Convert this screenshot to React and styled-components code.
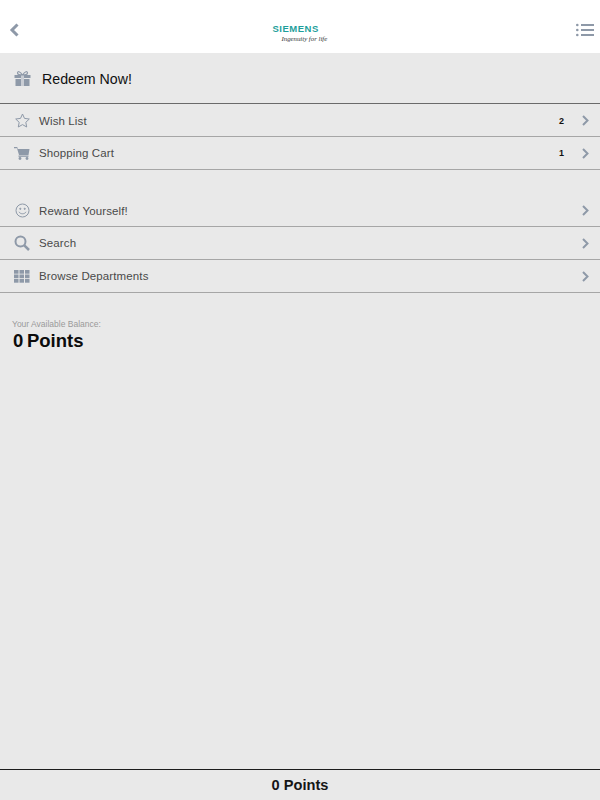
import React from 'react';
import styled, { createGlobalStyle } from 'styled-components';

const GlobalStyle = createGlobalStyle`
  html, body { margin: 0; padding: 0; }
  body { font-family: "Liberation Sans", Arial, sans-serif; background: #e9e9e9; }
`;

const Page = styled.div`
  width: 600px;
  height: 800px;
  display: flex;
  flex-direction: column;
  background: #e9e9e9;
  overflow: hidden;
`;

const Header = styled.header`
  height: 53px;
  flex: none;
  background: #fff;
  display: flex;
  align-items: center;
  justify-content: space-between;
  padding: 7px 5px 0 4px;
  box-sizing: border-box;
`;

const HeaderIcon = styled.div`
  width: 20px;
  display: flex;
  justify-content: center;
`;

const Logo = styled.div`
  display: flex;
  flex-direction: column;
  align-items: flex-start;
  width: 54px;
  margin-top: 5px;
`;

const LogoName = styled.div`
  font-size: 9.5px;
  line-height: 10px;
  font-weight: 700;
  letter-spacing: 0.5px;
  color: #1f9f9b;
`;

const LogoTag = styled.div`
  font-family: "Liberation Serif", serif;
  font-style: italic;
  font-size: 6.8px;
  line-height: 7px;
  color: #333;
  margin-left: 9px;
  margin-top: 1px;
  white-space: nowrap;
`;

const Redeem = styled.div`
  display: flex;
  align-items: center;
  gap: 11px;
  padding: 1px 14px 0;
  box-sizing: content-box;
  height: 49px;
  font-size: 14.2px;
  color: #111;
  border-bottom: 1px solid #6a6a6a;
`;

const List = styled.div`
  display: flex;
  flex-direction: column;
  margin-bottom: ${p => p.$gap || 0}px;
`;

const Row = styled.div`
  height: 33px;
  box-sizing: border-box;
  display: flex;
  align-items: center;
  padding: 0 11px 0 14px;
  border-bottom: 1px solid #a6a6a6;

  &:first-child {
    padding-top: 1px;
  }
`;

const RowIcon = styled.div`
  width: 16px;
  height: 16px;
  margin-right: 9px;
  display: flex;
  align-items: center;
  justify-content: center;
`;

const RowLabel = styled.div`
  flex: 1;
  font-size: 11.5px;
  letter-spacing: 0.12px;
  color: #4a4a4a;
`;

const Count = styled.div`
  font-size: 9px;
  font-weight: 700;
  color: #111;
  margin-right: 18px;
`;

const Balance = styled.div`
  padding: 26px 12px 0;
  flex: 1;
`;

const BalanceLabel = styled.div`
  font-size: 8.5px;
  line-height: 10px;
  color: #9a9a9a;
`;

const BalanceValue = styled.div`
  font-size: 18.5px;
  line-height: 24px;
  font-weight: 700;
  color: #0c0c0c;
  word-spacing: -1.5px;
  padding-left: 1px;
`;

const Footer = styled.footer`
  height: 30px;
  flex: none;
  border-top: 1px solid #1c1c1c;
  display: flex;
  align-items: center;
  justify-content: center;
  font-size: 14.6px;
  font-weight: 700;
  color: #161616;
`;

const ICON = '#8e99a8';

const Chevron = () => (
  <svg width="7" height="11" viewBox="0 0 7 11" fill="none" stroke={ICON} strokeWidth="2">
    <path d="M1 1l4.500 4.500L1 10" />
  </svg>
);

const Back = () => (
  <svg width="10" height="14" viewBox="0 0 10 14" fill="none" stroke={ICON} strokeWidth="3">
    <path d="M8.500 1.500L3 7l5.500 5.500" />
  </svg>
);

const Menu = () => (
  <svg width="18" height="14" viewBox="0 0 18 14" fill={ICON}>
    <circle cx="1.300" cy="2" r="1.300" />
    <circle cx="1.300" cy="7" r="1.300" />
    <circle cx="1.300" cy="12" r="1.300" />
    <rect x="5" y="1" width="13" height="2" />
    <rect x="5" y="6" width="13" height="2" />
    <rect x="5" y="11" width="13" height="2" />
  </svg>
);

const Gift = () => (
  <svg width="17" height="15" viewBox="0 0 17 15" fill={ICON}>
    <rect x="0.500" y="4" width="16" height="3" />
    <rect x="1.500" y="8" width="14" height="7" />
    <rect x="7" y="4" width="3" height="11" fill="#c9cdd4" />
    <path d="M8.500 4C6 0 3.500 0 3.500 2S6 4 8.500 4zM8.500 4C11 0 13.500 0 13.500 2S11 4 8.500 4z" fill="none" stroke={ICON} strokeWidth="1.200" />
  </svg>
);

const Star = () => (
  <svg width="15" height="15" viewBox="0 0 15 15" fill="none" stroke={ICON} strokeWidth="1">
    <path d="M7.500 1l2 4.400 4.800.6-3.500 3.300.9 4.700-4.200-2.400L3.300 14l.9-4.700L.7 6l4.800-.6z" />
  </svg>
);

const Cart = () => (
  <svg width="16" height="14" viewBox="0 0 16 14" fill={ICON}>
    <path d="M0 1h3.200l.6 2H15.500l-1 6H5L3 2.200H0z" />
    <path d="M4.500 9.500h10v1.300H4.500z" />
    <circle cx="6" cy="12.500" r="1.400" />
    <circle cx="13" cy="12.500" r="1.400" />
  </svg>
);

const Smile = () => (
  <svg width="15" height="15" viewBox="0 0 15 15" fill="none" stroke={ICON} strokeWidth="1">
    <circle cx="7.500" cy="7.500" r="6.500" />
    <circle cx="5.300" cy="5.800" r="0.600" fill={ICON} />
    <circle cx="9.700" cy="5.800" r="0.600" fill={ICON} />
    <path d="M4 8.800c1 2.600 6 2.600 7 0" />
  </svg>
);

const Search = () => (
  <svg width="16" height="16" viewBox="0 0 16 16" fill="none" stroke={ICON}>
    <circle cx="6.500" cy="6.500" r="5" strokeWidth="2" />
    <path d="M10.300 10.300L15 15" strokeWidth="2.500" />
  </svg>
);

const Grid = () => (
  <svg width="16" height="13" viewBox="0 0 16 13" fill={ICON}>
    {[0, 4.500, 9].map(y =>
      [0, 5.500, 11].map(x => <rect key={`${x}-${y}`} x={x} y={y} width="4.500" height="3.700" />)
    )}
  </svg>
);

const topRows = [
  { label: 'Wish List', icon: <Star />, count: 2 },
  { label: 'Shopping Cart', icon: <Cart />, count: 1 },
];

const bottomRows = [
  { label: 'Reward Yourself!', icon: <Smile /> },
  { label: 'Search', icon: <Search /> },
  { label: 'Browse Departments', icon: <Grid /> },
];

const MenuRow = ({ label, icon, count }) => (
  <Row>
    <RowIcon>{icon}</RowIcon>
    <RowLabel>{label}</RowLabel>
    {count && <Count>{count}</Count>}
    <Chevron />
  </Row>
);

export default function App() {
  return (
    <Page>
      <GlobalStyle />
      <Header>
        <HeaderIcon><Back /></HeaderIcon>
        <Logo>
          <LogoName>SIEMENS</LogoName>
          <LogoTag>Ingenuity for life</LogoTag>
        </Logo>
        <HeaderIcon><Menu /></HeaderIcon>
      </Header>
      <Redeem>
        <Gift />
        Redeem Now!
      </Redeem>
      <List $gap={24}>
        {topRows.map(r => <MenuRow key={r.label} {...r} />)}
      </List>
      <List>
        {bottomRows.map(r => <MenuRow key={r.label} {...r} />)}
      </List>
      <Balance>
        <BalanceLabel>Your Available Balance:</BalanceLabel>
        <BalanceValue>0 Points</BalanceValue>
      </Balance>
      <Footer>0 Points</Footer>
    </Page>
  );
}
